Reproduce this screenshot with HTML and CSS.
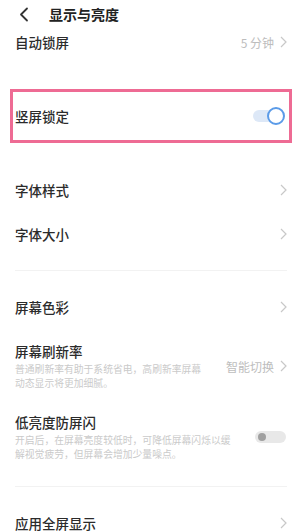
FILE: index.html
```html
<!DOCTYPE html>
<html lang="zh-CN">
<head>
    <meta charset="UTF-8">
    <meta name="viewport" content="width=device-width, initial-scale=1.0">
    <title>显示与亮度</title>
    <link rel="stylesheet" href="styles.css">
</head>
<body>
    <div class="topbar">
        <svg class="back" width="10" height="15" viewBox="0 0 10 15">
            <path d="M8 1.5 L2 7.5 L8 13.5" fill="none" stroke="#333" stroke-width="1.8" stroke-linecap="round" stroke-linejoin="round"/>
        </svg>
        <div class="title">显示与亮度</div>
    </div>

    <div class="row first">
        <span class="label">自动锁屏</span>
        <span class="value">5 分钟 <svg class="chev" width="7" height="12" viewBox="0 0 7 12"><path d="M1 1 L6 6 L1 11" fill="none" stroke="#c8c8c8" stroke-width="1.2"/></svg></span>
    </div>

    <!-- highlighted row -->
    <div class="highlight">
        <span class="label">竖屏锁定</span>
        <span class="toggle on"></span>
    </div>

    <div class="group">
        <div class="row">
            <span class="label">字体样式</span>
            <svg class="chev" width="7" height="12" viewBox="0 0 7 12"><path d="M1 1 L6 6 L1 11" fill="none" stroke="#c8c8c8" stroke-width="1.2"/></svg>
        </div>
        <div class="row">
            <span class="label">字体大小</span>
            <svg class="chev" width="7" height="12" viewBox="0 0 7 12"><path d="M1 1 L6 6 L1 11" fill="none" stroke="#c8c8c8" stroke-width="1.2"/></svg>
        </div>
    </div>

    <div class="divider"></div>

    <div class="row colors">
        <span class="label">屏幕色彩</span>
        <svg class="chev" width="7" height="12" viewBox="0 0 7 12"><path d="M1 1 L6 6 L1 11" fill="none" stroke="#c8c8c8" stroke-width="1.2"/></svg>
    </div>

    <div class="item refresh">
        <div class="text">
            <div class="label">屏幕刷新率</div>
            <div class="desc">普通刷新率有助于系统省电，高刷新率屏幕<br>动态显示将更加细腻。</div>
        </div>
        <span class="value">智能切换 <svg class="chev" width="7" height="12" viewBox="0 0 7 12"><path d="M1 1 L6 6 L1 11" fill="none" stroke="#c8c8c8" stroke-width="1.2"/></svg></span>
    </div>

    <div class="item flicker">
        <div class="text">
            <div class="label">低亮度防屏闪</div>
            <div class="desc">开启后，在屏幕亮度较低时，可降低屏幕闪烁以缓<br>解视觉疲劳，但屏幕会增加少量噪点。</div>
        </div>
        <span class="toggle off"></span>
    </div>

    <div class="divider bottom"></div>

    <div class="row last">
        <span class="label">应用全屏显示</span>
        <svg class="chev" width="7" height="12" viewBox="0 0 7 12"><path d="M1 1 L6 6 L1 11" fill="none" stroke="#c8c8c8" stroke-width="1.2"/></svg>
    </div>
</body>
</html>
```

FILE: styles.css
```css
body {
    margin: 0;
    background: #fff;
    font-family: "Noto Sans CJK SC", "Noto Sans", sans-serif;
    color: #2b2b2b;
    overflow: hidden;
}
.topbar {
    height: 28px;
    display: flex;
    align-items: center;
    padding-left: 19px;
}
.back {
    display: block;
}
.title {
    margin-left: 20px;
    font-size: 14px;
    font-weight: 700;
    color: #222;
}
.row {
    height: 44px;
    display: flex;
    align-items: center;
    justify-content: space-between;
    padding: 0 15px;
}
.row.first {
    height: 28px;
}
.label {
    font-size: 13.5px;
    line-height: 19px;
    font-weight: 500;
    color: #2b2b2b;
}
.value {
    display: flex;
    align-items: center;
    gap: 6px;
    font-size: 12px;
    color: #bdbdbd;
}
.chev {
    display: block;
}
.highlight {
    margin: 33px 10px 0 10px;
    height: 54px;
    box-sizing: border-box;
    border: 3px solid #ee6b94;
    display: flex;
    align-items: center;
    justify-content: space-between;
    padding: 0 4px 0 2px;
}
.group {
    margin-top: 25px;
}
.divider {
    height: 1px;
    background: #f2f2f2;
    margin: 14px 15px 0 15px;
}
.row.colors {
    margin-top: 14px;
}
.item {
    display: flex;
    align-items: center;
    justify-content: space-between;
    padding: 0 15px;
}
.item.refresh {
    margin-top: 13px;
}
.item.flicker {
    margin-top: 23px;
}
.desc {
    margin-top: 1px;
    font-size: 9.8px;
    line-height: 14px;
    color: #cacaca;
    white-space: nowrap;
}
.toggle {
    position: relative;
    width: 32px;
    height: 18px;
    flex-shrink: 0;
}
.toggle::before {
    content: "";
    position: absolute;
    left: 0;
    top: 3px;
    width: 31px;
    height: 12px;
    border-radius: 6px;
    background: #e8e8e8;
}
.toggle.on::before {
    background: #dde8f7;
}
.toggle.on::after {
    content: "";
    position: absolute;
    right: 0;
    top: 0;
    width: 14px;
    height: 14px;
    border-radius: 50%;
    background: #fff;
    border: 2px solid #5b9be8;
}
.toggle.off::after {
    content: "";
    position: absolute;
    left: 3px;
    top: 5px;
    width: 8px;
    height: 8px;
    border-radius: 50%;
    background: #a0a0a0;
}
.divider.bottom {
    margin-top: 25px;
}
.row.last {
    margin-top: 14px;
}
```
